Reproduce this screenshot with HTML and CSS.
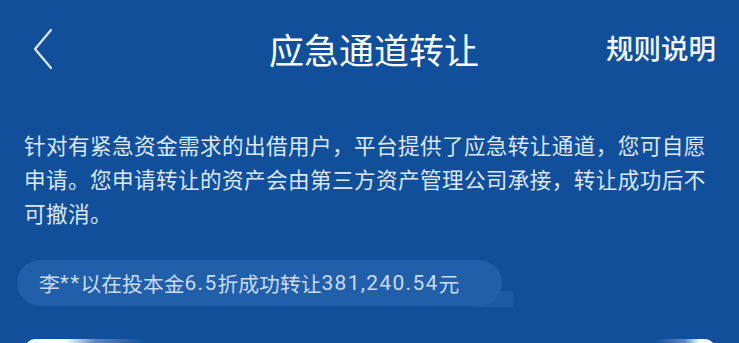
FILE: index.html
```html
<!DOCTYPE html>
<html lang="zh-CN">
<head>
<meta charset="utf-8">
<title>应急通道转让</title>
<link rel="stylesheet" href="styles.css">
</head>
<body>
<div class="page">
  <header class="nav">
    <div class="nav-left">
      <svg class="back" width="22" height="42" viewBox="0 0 22 42" fill="none">
        <path d="M19 2 L3 21 L19 40" stroke="#dfe9f6" stroke-width="2.2" stroke-linecap="round" stroke-linejoin="round"/>
      </svg>
    </div>
    <h1 class="title">应急通道转让</h1>
    <div class="nav-right"><span class="rules">规则说明</span></div>
  </header>
  <p class="intro">针对有紧急资金需求的出借用户，平台提供了应急转让通道，您可自愿申请。您申请转让的资产会由第三方资产管理公司承接，转让成功后不可撤消。</p>
  <div class="ticker">
    <div class="pill">李<span class="num">**</span>以在投本金<span class="num">6.5</span>折成功转让<span class="num">381,240.54</span>元</div>
  </div>
  <div class="card"></div>
</div>
</body>
</html>
```
FILE: styles.css
```css
html, body {
  margin: 0;
  padding: 0;
}
body {
  background: #114f9b;
  font-family: "Noto Sans CJK SC", "Noto Sans", sans-serif;
  color: #fff;
}
.page {
  width: 739px;
  height: 343px;
  overflow: hidden;
  position: relative;
}
.nav {
  height: 100px;
  display: grid;
  grid-template-columns: 1fr auto 1fr;
  align-items: center;
  padding: 0 23px 0 32px;
  box-sizing: border-box;
}
.nav-left {
  display: flex;
  align-items: center;
}
.back {
  display: block;
  margin-top: -2px;
}
.title {
  margin: -4px 0 0 0;
  font-size: 35px;
  font-weight: 400;
  line-height: 1;
  color: #fbfdff;
}
.nav-right {
  display: flex;
  justify-content: flex-end;
}
.rules {
  font-size: 27.5px;
  font-weight: 500;
  color: #f2f6fc;
  line-height: 1;
  margin-top: -4px;
}
.intro {
  margin: 0;
  padding: 28px 30px 0 24px;
  font-size: 21.6px;
  letter-spacing: 0.4px;
  line-height: 34px;
  color: #dce7f5;
}
.ticker {
  position: relative;
  margin: 30px 0 0 17px;
  width: 485px;
}
.ticker::after {
  content: "";
  position: absolute;
  right: -11px;
  top: 31px;
  width: 40px;
  height: 16px;
  background: #1d5ba7;
  z-index: 0;
}
.pill {
  position: relative;
  z-index: 1;
  height: 46px;
  border-radius: 23px;
  background: #215fa9;
  padding-left: 22px;
  display: flex;
  align-items: center;
  font-size: 20.8px;
  color: #c9dcf3;
  white-space: nowrap;
}
.num {
  font-family: "Roboto", "Liberation Sans", sans-serif;
  font-size: 21px;
  letter-spacing: 1.3px;
}
.card {
  position: absolute;
  left: 25px;
  right: 24px;
  top: 339px;
  height: 40px;
  border-radius: 10px;
  background: linear-gradient(to right, #ffffff 0, #ffffff 40px, #5d86c0 70px, #114f9b 120px, #114f9b calc(100% - 60px), #5d86c0 calc(100% - 30px), #ffffff calc(100% - 15px));
}
```
